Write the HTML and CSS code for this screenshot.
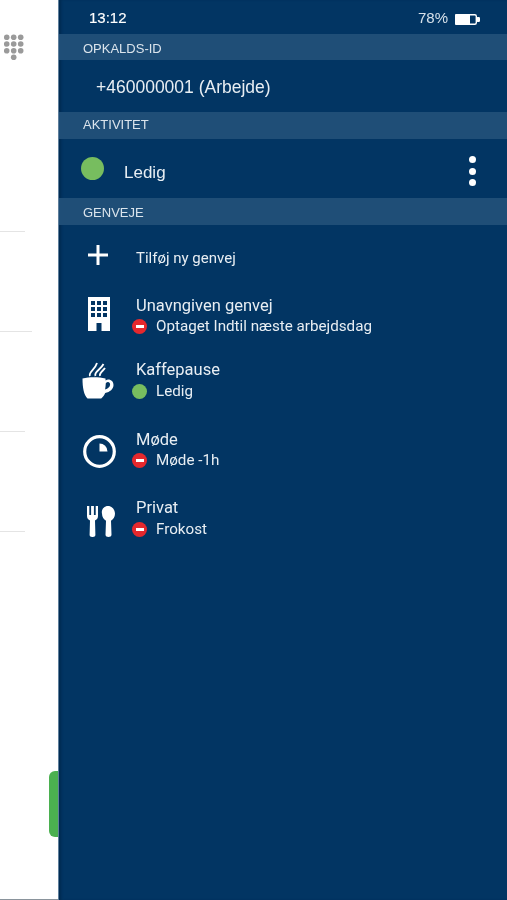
FILE: index.html
```html
<!DOCTYPE html>
<html lang="da">
<head>
    <meta charset="utf-8">
    <title>Genveje</title>
    <link rel="stylesheet" href="styles.css">
</head>
<body>
<div class="screen">

    <div class="behind">
        <svg class="dialpad" width="20" height="28" viewBox="0 0 20 28" fill="#9a9a9a">
            <circle cx="2.700" cy="3.300" r="2.800"/><circle cx="9.700" cy="3.300" r="2.800"/><circle cx="16.700" cy="3.300" r="2.800"/>
            <circle cx="2.700" cy="10" r="2.800"/><circle cx="9.700" cy="10" r="2.800"/><circle cx="16.700" cy="10" r="2.800"/>
            <circle cx="2.700" cy="16.700" r="2.800"/><circle cx="9.700" cy="16.700" r="2.800"/><circle cx="16.700" cy="16.700" r="2.800"/>
            <circle cx="9.700" cy="23.300" r="2.800"/>
        </svg>
        <div class="sep sep-first"></div>
        <div class="sep sep-long"></div>
        <div class="sep"></div>
        <div class="sep"></div>
        <div class="green-tab"></div>
    </div>

    <div class="drawer">
        <div class="status">
            <span class="time">13:12</span>
            <span class="battery-text">78%</span>
            <svg class="battery" width="25" height="11" viewBox="0 0 25 11">
                <rect x="0.700" y="0.700" width="20.600" height="9.600" rx="1.500" fill="#023563" stroke="#fff" stroke-width="1.400"/>
                <rect x="0" y="0" width="15" height="11" rx="1" fill="#fff"/>
                <rect x="21.500" y="3" width="3.500" height="5" rx="1.200" fill="#fff"/>
            </svg>
        </div>

        <div class="section">OPKALDS-ID</div>
        <div class="caller">+460000001 (Arbejde)</div>

        <div class="section section-activity">AKTIVITET</div>
        <div class="activity">
            <span class="dot-big"></span>
            <span class="activity-name">Ledig</span>
            <span class="more"><i></i><i></i><i></i></span>
        </div>

        <div class="section">GENVEJE</div>

        <div class="shortcuts">
            <div class="add-row">
                <div class="icon icon-plus">
                    <svg width="20" height="20" viewBox="0 0 20 20" fill="#fff">
                        <rect x="0" y="8.500" width="20" height="3"/>
                        <rect x="8.500" y="0" width="3" height="20"/>
                    </svg>
                </div>
                <span class="add-label">Tilføj ny genvej</span>
            </div>

            <div class="row row-office">
                <div class="icon icon-office">
                    <svg width="22" height="34" viewBox="0 0 22 34">
                        <path fill="#fff" fill-rule="evenodd" d="M0 0h22v34h-8.500v-8h-5v8H0zM3 4v4h4V4zM9 4v4h4V4zM15 4v4h4V4zM3 10v4h4v-4zM9 10v4h4v-4zM15 10v4h4v-4zM3 16v4h4v-4zM9 16v4h4v-4zM15 16v4h4v-4z"/>
                    </svg>
                </div>
                <div class="texts">
                    <div class="title">Unavngiven genvej</div>
                    <div class="sub"><span class="busy"></span>Optaget Indtil næste arbejdsdag</div>
                </div>
            </div>

            <div class="row row-coffee">
                <div class="icon">
                    <svg width="32" height="37" viewBox="0 0 32 37">
                        <path fill="none" stroke="#fff" stroke-width="1.800" d="M8 14c-2-4 5-6 7-13M13.500 14c-2-4 5-6 8-12M18 14c-1-3 3-5 5-8"/>
                        <path fill="#fff" fill-rule="evenodd" d="M.5 16.500c7-1.700 16-1.700 23 0l.1 2c.9-.6 1.800-.9 2.700-.9 3 0 5.200 2.300 5.200 5.400 0 4-3.500 7-8.300 8-.8 2-2.200 4-4 5.500H5.500C2 33 .5 26 .5 16.500zm23.300 4.700c-.1 2-.3 4-.7 6.200 2.800-.8 5-2.500 5-4.900 0-1.500-.9-2.400-2.100-2.400-.8 0-1.500.4-2.200 1.100z"/>
                    </svg>
                </div>
                <div class="texts">
                    <div class="title">Kaffepause</div>
                    <div class="sub sub-wide"><span class="free"></span>Ledig</div>
                </div>
            </div>

            <div class="row row-meeting">
                <div class="icon icon-clock">
                    <svg width="33" height="33" viewBox="0 0 33 33">
                        <circle cx="16.500" cy="16.500" r="14.800" fill="none" stroke="#fff" stroke-width="3.200"/>
                        <path fill="#fff" d="M16.500 8.500a8 8 0 0 1 8 8h-8z"/>
                    </svg>
                </div>
                <div class="texts">
                    <div class="title">Møde</div>
                    <div class="sub"><span class="busy"></span>Møde -1h</div>
                </div>
            </div>

            <div class="row row-private">
                <div class="icon icon-food">
                    <svg width="28" height="31" viewBox="0 0 28 31" fill="#fff">
                        <path d="M0 0h2.300v9h1.800V0h2.800v9h1.800V0H11v10c0 2.500-1.500 3.800-3 4.500l.4 14.500c0 2.700-5.800 2.700-5.800 0L3 14.500C1.500 13.800 0 12.500 0 10z"/>
                        <path d="M21 0c3.800 0 7 3.400 7 7.800 0 3.200-1.800 5.800-4 7l.5 14c0 2.900-6 2.900-6 0l.5-14c-2.200-1.200-4-3.800-4-7C14 3.400 17.200 0 21 0z"/>
                    </svg>
                </div>
                <div class="texts">
                    <div class="title">Privat</div>
                    <div class="sub sub-wide"><span class="busy"></span>Frokost</div>
                </div>
            </div>
        </div>
    </div>
</div>
</body>
</html>
```

FILE: styles.css
```css
* {
    box-sizing: border-box;
}

html, body {
    margin: 0;
    height: 100%;
    overflow: hidden;
}

body {
    font-family: "Liberation Sans", Arial, sans-serif;
    color: #e8eef3;
    background: #fff;
}

.screen {
    display: flex;
    width: 507px;
    height: 900px;
    filter: blur(0.35px);
}

/* page that is left behind the open drawer */
.behind {
    position: relative;
    width: 58px;
    flex: none;
    background: #fff;
    border-bottom: 1px solid #8a949c;
}

.dialpad {
    display: block;
    margin: 34px 0 0 4px;
}

.sep {
    width: 25px;
    height: 1px;
    margin-top: 99px;
    background: #e4e4e4;
}

.sep-first {
    margin-top: 169px;
}

.sep-long {
    width: 32px;
}

.green-tab {
    position: absolute;
    right: 0;
    top: 771px;
    width: 9.500px;
    height: 66px;
    background: #4bb050;
    border-radius: 6px 0 0 6px;
}

.drawer {
    flex: 1;
    background: #023563;
    border-left: 1px solid #5f7f9c;
    box-shadow: inset 3px 0 3px -1px #012a50;
}

.status {
    display: flex;
    align-items: center;
    height: 33.500px;
    padding: 2px 27px 0 30px;
    font-size: 15px;
}

.time {
    flex: 1;
    color: #fff;
    -webkit-text-stroke: 0.15px #fff;
}

.battery-text {
    margin-right: 7px;
    color: #d6e0e9;
}

.battery {
    margin-top: 3px;
}

.section {
    height: 26.500px;
    padding-left: 24px;
    line-height: 29px;
    font-size: 13px;
    background: #1f4e77;
    color: #dbe4ec;
}

.section-activity {
    line-height: 25px;
}

.caller {
    height: 52px;
    padding-left: 37px;
    line-height: 54px;
    font-size: 17.500px;
}

.activity {
    display: flex;
    align-items: center;
    height: 59.500px;
    padding: 0 31px 0 22px;
}

.dot-big {
    width: 23px;
    height: 23px;
    border-radius: 50%;
    background: #77bd5f;
}

.activity-name {
    flex: 1;
    margin-left: 20px;
    margin-top: 9px;
    font-size: 17px;
}

.more {
    display: flex;
    flex-direction: column;
    gap: 4.500px;
    margin-top: 6px;
}

.more i {
    display: block;
    width: 7px;
    height: 7px;
    border-radius: 50%;
    background: #fff;
}

.add-row {
    display: flex;
    align-items: center;
    height: 64px;
}

.add-label {
    margin-top: 2px;
    font-family: Roboto, sans-serif;
    font-size: 15px;
}

.icon {
    display: flex;
    justify-content: center;
    align-items: center;
    width: 77px;
    flex: none;
}

.icon-plus {
    margin-top: -4px;
}

.icon-office {
    margin-top: -3px;
}

.icon-office svg {
    margin-left: 3px;
}

.icon-clock {
    margin-top: 3px;
}

.icon-clock svg {
    margin-left: 4px;
}

.icon-food {
    margin-top: 6px;
}

.icon-food svg {
    margin-left: 7px;
}

.row {
    display: flex;
    align-items: center;
    height: 46px;
}

.row-office {
    margin-top: 4px;
}

.row-coffee {
    margin-top: 19px;
}

.row-meeting {
    margin-top: 23px;
}

.row-private {
    margin-top: 23px;
}

.texts {
    font-family: Roboto, sans-serif;
}

.title {
    font-size: 16.500px;
    line-height: 21px;
}

.sub {
    display: flex;
    align-items: center;
    margin-left: -4px;
    font-size: 15.200px;
    line-height: 21px;
}

.sub-wide {
    margin-top: 1px;
}

.busy, .free {
    width: 15px;
    height: 15px;
    margin-right: 9px;
    border-radius: 50%;
}

.free {
    background: #77bd5f;
}

.busy {
    position: relative;
    background: #e5282d;
}

.busy::after {
    content: "";
    position: absolute;
    left: 3.500px;
    top: 6px;
    width: 8px;
    height: 3px;
    background: #fff;
}
```
